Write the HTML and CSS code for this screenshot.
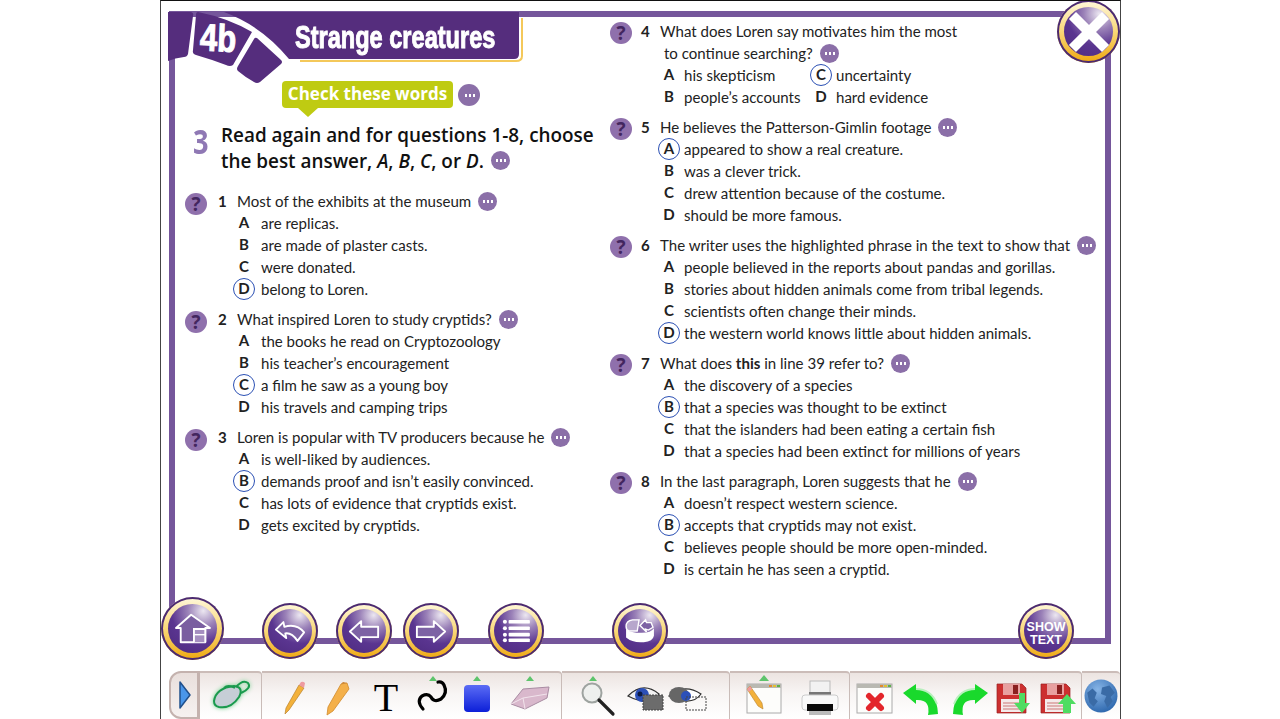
FILE: index.html
```html
<!DOCTYPE html>
<html>
<head>
	<title>Strange creatures</title>
	<link rel="stylesheet" href="styles.css">
</head>
<body>
<div class="stage">
	<div class="frame"></div>

	<div class="unit-head">
		<svg width="960" height="100" viewBox="160 0 960 100">
			<path d="M300 61H516Q522 61 522 56V18" fill="none" stroke="#f4c85a" stroke-width="2"/>
			<path d="M224 12H519V54Q519 59 514 59H289Q262 26 224 12Z" fill="#552d7d"/>
			<path d="M168 12H190Q194 12 193 16L188 54Q187 57 184 57Q175 58 168 61Z" fill="#552d7d"/>
			<path d="M198 12Q228 18 252 32L233 65Q230 67 226 65Q210 59 196 55Q192 54 193 50L196 15Q196 12 198 12Z" fill="#552d7d"/>
			<path d="M257 38L281 60Q283 62 281 64L260 82Q257 84 254 82Q245 77 238 71Q236 69 238 66L254 39Q255 37 257 38Z" fill="#552d7d"/>
		</svg>
		<span class="unit-no">4b</span>
		<span class="unit-title">Strange creatures</span>
	</div>

	<div class="sheet">
		<div class="col col-left">
			<div class="check-row">
				<div class="check-words">Check these words</div>
				<span class="dots"></span>
			</div>
			<div class="task">
				<div class="task-no">3</div>
				<div class="task-text">Read again and for questions 1-8, choose<br>the best answer, <i>A</i>, <i>B</i>, <i>C</i>, or <i>D</i>. <span class="dots dots-inline"></span></div>
			</div>

			<div class="q">
				<div class="q-row"><span class="help">?</span><b class="num">1</b><span>Most of the exhibits at the museum</span><span class="dots"></span></div>
				<div class="opt"><b class="letter">A</b><span>are replicas.</span></div>
				<div class="opt"><b class="letter">B</b><span>are made of plaster casts.</span></div>
				<div class="opt"><b class="letter">C</b><span>were donated.</span></div>
				<div class="opt"><b class="letter picked">D</b><span>belong to Loren.</span></div>
			</div>
			<div class="q">
				<div class="q-row"><span class="help">?</span><b class="num">2</b><span>What inspired Loren to study cryptids?</span><span class="dots"></span></div>
				<div class="opt"><b class="letter">A</b><span>the books he read on Cryptozoology</span></div>
				<div class="opt"><b class="letter">B</b><span>his teacher’s encouragement</span></div>
				<div class="opt"><b class="letter picked">C</b><span>a film he saw as a young boy</span></div>
				<div class="opt"><b class="letter">D</b><span>his travels and camping trips</span></div>
			</div>
			<div class="q">
				<div class="q-row"><span class="help">?</span><b class="num">3</b><span>Loren is popular with TV producers because he</span><span class="dots"></span></div>
				<div class="opt"><b class="letter">A</b><span>is well-liked by audiences.</span></div>
				<div class="opt"><b class="letter picked">B</b><span>demands proof and isn’t easily convinced.</span></div>
				<div class="opt"><b class="letter">C</b><span>has lots of evidence that cryptids exist.</span></div>
				<div class="opt"><b class="letter">D</b><span>gets excited by cryptids.</span></div>
			</div>
		</div>

		<div class="col col-right">
			<div class="q">
				<div class="q-row"><span class="help">?</span><b class="num">4</b><span>What does Loren say motivates him the most</span></div>
				<div class="q-more">to continue searching?<span class="dots"></span></div>
				<div class="opt-pair">
					<div class="opt"><b class="letter">A</b><span>his skepticism</span></div>
					<div class="opt"><b class="letter picked">C</b><span>uncertainty</span></div>
				</div>
				<div class="opt-pair">
					<div class="opt"><b class="letter">B</b><span>people’s accounts</span></div>
					<div class="opt"><b class="letter">D</b><span>hard evidence</span></div>
				</div>
			</div>
			<div class="q">
				<div class="q-row"><span class="help">?</span><b class="num">5</b><span>He believes the Patterson-Gimlin footage</span><span class="dots"></span></div>
				<div class="opt"><b class="letter picked">A</b><span>appeared to show a real creature.</span></div>
				<div class="opt"><b class="letter">B</b><span>was a clever trick.</span></div>
				<div class="opt"><b class="letter">C</b><span>drew attention because of the costume.</span></div>
				<div class="opt"><b class="letter">D</b><span>should be more famous.</span></div>
			</div>
			<div class="q">
				<div class="q-row"><span class="help">?</span><b class="num">6</b><span>The writer uses the highlighted phrase in the text to show that</span><span class="dots"></span></div>
				<div class="opt"><b class="letter">A</b><span>people believed in the reports about pandas and gorillas.</span></div>
				<div class="opt"><b class="letter">B</b><span>stories about hidden animals come from tribal legends.</span></div>
				<div class="opt"><b class="letter">C</b><span>scientists often change their minds.</span></div>
				<div class="opt"><b class="letter picked">D</b><span>the western world knows little about hidden animals.</span></div>
			</div>
			<div class="q">
				<div class="q-row"><span class="help">?</span><b class="num">7</b><span>What does <b>this</b> in line 39 refer to?</span><span class="dots"></span></div>
				<div class="opt"><b class="letter">A</b><span>the discovery of a species</span></div>
				<div class="opt"><b class="letter picked">B</b><span>that a species was thought to be extinct</span></div>
				<div class="opt"><b class="letter">C</b><span>that the islanders had been eating a certain fish</span></div>
				<div class="opt"><b class="letter">D</b><span>that a species had been extinct for millions of years</span></div>
			</div>
			<div class="q">
				<div class="q-row"><span class="help">?</span><b class="num">8</b><span>In the last paragraph, Loren suggests that he</span><span class="dots"></span></div>
				<div class="opt"><b class="letter">A</b><span>doesn’t respect western science.</span></div>
				<div class="opt"><b class="letter picked">B</b><span>accepts that cryptids may not exist.</span></div>
				<div class="opt"><b class="letter">C</b><span>believes people should be more open-minded.</span></div>
				<div class="opt"><b class="letter">D</b><span>is certain he has seen a cryptid.</span></div>
			</div>
		</div>
	</div>

	<div class="round round-big round-close">
		<div class="round-in">
			<svg width="44" height="44" viewBox="0 0 44 44"><path d="M9 9L35 35M35 9L9 35" stroke="#fff" stroke-width="10" stroke-linecap="square"/></svg>
		</div>
	</div>

	<div class="nav">
		<div class="round round-big nav-home">
			<div class="round-in">
				<svg width="38" height="34" viewBox="0 0 40 36"><path d="M2 17L18 3L38 17H33V32H7V17Z" fill="#7a5ea0" stroke="#fff" stroke-width="2" stroke-linejoin="round"/><path d="M21 32V18H33V32" fill="#a58fc0" stroke="#fff" stroke-width="2"/><path d="M21 24H33" stroke="#fff" stroke-width="1.5"/></svg>
			</div>
		</div>
		<div class="round nav-back">
			<div class="round-in">
				<svg width="32" height="25" viewBox="0 0 34 26"><path d="M2 11L10 3L11 8Q24 4 32 14L25 23Q19 14 12 15L13 20Z" fill="#7d62a4" stroke="#fff" stroke-width="2" stroke-linejoin="round"/></svg>
			</div>
		</div>
		<div class="round nav-prev">
			<div class="round-in">
				<svg width="32" height="25" viewBox="0 0 34 26"><path d="M2 13L14 2V8H32V19H14V24Z" fill="#7d62a4" stroke="#fff" stroke-width="2" stroke-linejoin="round"/></svg>
			</div>
		</div>
		<div class="round nav-next">
			<div class="round-in">
				<svg width="32" height="25" viewBox="0 0 34 26"><path d="M32 13L20 2V8H2V19H20V24Z" fill="#7d62a4" stroke="#fff" stroke-width="2" stroke-linejoin="round"/></svg>
			</div>
		</div>
		<div class="round nav-list">
			<div class="round-in">
				<svg width="28" height="24" viewBox="0 0 30 26"><g fill="#fff"><circle cx="3" cy="3" r="2.2"/><circle cx="3" cy="10" r="2.2"/><circle cx="3" cy="17" r="2.2"/><circle cx="3" cy="23" r="2.2"/><rect x="7" y="1" width="23" height="4" rx="1"/><rect x="7" y="8" width="23" height="4" rx="1"/><rect x="7" y="15" width="23" height="4" rx="1"/><rect x="7" y="21" width="23" height="4" rx="1"/></g></svg>
			</div>
		</div>
		<div class="round nav-disc">
			<div class="round-in">
				<svg width="30" height="26" viewBox="0 0 32 28"><path d="M1 9Q1 3 8 2L15 2L13 14H4Q1 13 1 9Z" fill="#b7a7cc" stroke="#fff" stroke-width="1.5"/><path d="M16 8L22 2L23 5H28L30 10L25 13L22 12L23 15Z" fill="#7d62a4" stroke="#fff" stroke-width="1.5"/><path d="M1 12V21Q8 27 20 26Q30 25 31 19V11Q28 16 18 16Q6 16 1 12Z" fill="#fff"/></svg>
			</div>
		</div>
		<div class="round nav-text">
			<div class="round-in">SHOW<br>TEXT</div>
		</div>
	</div>

	<div class="toolbar">
		<div class="tb-sec tb-handle">
			<svg width="14" height="30" viewBox="0 0 14 30"><path d="M2 2L12 15L2 28Z" fill="#4a96ea" stroke="#21508c" stroke-width="1.5" stroke-linejoin="round"/></svg>
		</div>
		<div class="tb-sec tb-mouse">
			<svg class="mouse" width="44" height="40" viewBox="0 0 44 40"><path d="M5 25Q7 12 25 10Q35 11 30 21Q22 33 10 31Q5 30 5 25Z" fill="#c6ced6" stroke="#1a9a4e" stroke-width="2"/><path d="M15 12Q19 8 26 12M27 11Q34 3 39 7Q43 12 32 17" fill="none" stroke="#1a9a4e" stroke-width="2"/></svg>
		</div>
		<div class="tb-sec tb-draw">
			<svg class="tool" viewBox="0 0 40 46"><path d="M26 12L31 15L16 37L12 41L13 35Z" fill="#f3b13a" stroke="#b9812a" stroke-width=".7"/><path d="M26 12L28 9Q30 8 32 10L31 15Z" fill="#ee9aa0"/></svg>
			<svg class="tool" viewBox="0 0 40 46"><path d="M25 11L31 10L33 16L17 38L11 42L12 34Z" fill="#f4b04a" stroke="#d08a2c" stroke-width=".8"/><path d="M25 11L27 9L31 10Z" fill="#c97f2a"/></svg>
			<svg class="tool" viewBox="0 0 40 46"><text x="20" y="38" class="tool-t">T</text></svg>
			<svg class="tool" viewBox="0 0 40 46"><path class="flag" d="M20 3L24 8H16Z"/><path d="M10 36Q3 28 9 23Q15 20 18 24Q21 30 28 26Q35 20 31 12Q29 8 25 9" fill="none" stroke="#000" stroke-width="3.2" stroke-linecap="round"/></svg>
			<svg class="tool" viewBox="0 0 40 46"><defs><linearGradient id="blue" x1="0" y1="0" x2="0" y2="1"><stop offset="0" stop-color="#5b6cf5"/><stop offset="1" stop-color="#0c1fd8"/></linearGradient></defs><path class="flag" d="M20 3L24 8H16Z"/><rect x="7" y="12" width="26" height="27" rx="4" fill="url(#blue)"/></svg>
			<svg class="tool" viewBox="0 0 40 46"><path class="flag" d="M20 3L24 8H16Z"/><path d="M1 31L13 16L39 14L37 25L15 36Z" fill="#d9b8cc" stroke="#a98ca3" stroke-width="1"/><path d="M13 25L37 21M13 25L15 36M13 25L1 31" fill="none" stroke="#f2e4ec" stroke-width="1"/></svg>
		</div>
		<div class="tb-sec tb-view">
			<svg class="tool" viewBox="0 0 40 46"><path class="flag" d="M16 3L20 8H12Z"/><circle cx="15" cy="20" r="9.5" fill="#eef0ee" stroke="#9ea3a0" stroke-width="2"/><path d="M22 27L36 41" stroke="#222" stroke-width="3.2" stroke-linecap="round"/></svg>
			<svg class="tool" viewBox="0 0 40 46"><path d="M3 23Q18 8 34 21Q24 34 3 23Z" fill="#f2f2f2" stroke="#333" stroke-width="1.2"/><circle cx="17" cy="22" r="7" fill="#2c50b8"/><circle cx="15" cy="21" r="2.5" fill="#0c1a44"/><rect x="18" y="22" width="20" height="15" fill="#6c6c6c" stroke="#444" stroke-dasharray="2 1"/></svg>
			<svg class="tool" viewBox="0 0 40 46"><path d="M1 23Q16 10 33 21Q24 34 1 23Z" fill="#fff" stroke="#333" stroke-width="1.2"/><ellipse cx="11" cy="22" rx="10" ry="8" fill="#666"/><circle cx="18" cy="23" r="5" fill="#2c50b8"/><rect x="18" y="24" width="20" height="13" fill="none" stroke="#444" stroke-dasharray="2 1"/></svg>
		</div>
		<div class="tb-sec tb-note">
			<svg class="tool" viewBox="0 0 40 46"><path class="flag" d="M21 2L26 8H16Z"/><rect x="4" y="11" width="34" height="29" fill="#fdfdfb" stroke="#aaa"/><rect x="4" y="11" width="34" height="4" fill="#b9b9b2"/><rect x="26" y="12" width="3" height="2" fill="#e28a30"/><rect x="30" y="12" width="3" height="2" fill="#e2c030"/><rect x="34" y="12" width="3" height="2" fill="#5cb04c"/><path d="M4 16L7 13L19 30L20 36L15 33Z" fill="#f3b13a" stroke="#b9812a" stroke-width=".6"/><path d="M4 16L7 13L9 16L6 19Z" fill="#ee9aa0"/></svg>
			<svg class="tool" viewBox="0 0 40 46"><rect x="10" y="8" width="20" height="15" fill="#f2f2f2" stroke="#bbb"/><rect x="9" y="19" width="22" height="4" fill="#777"/><rect x="2" y="22" width="36" height="15" rx="3" fill="#f9f9f9" stroke="#ccc"/><rect x="7" y="31" width="26" height="7" fill="#0a0a0a"/><rect x="9" y="38" width="22" height="4" fill="#bbb"/></svg>
		</div>
		<div class="tb-sec tb-file">
			<svg class="tool" viewBox="0 0 40 46"><rect x="2" y="11" width="35" height="29" fill="#fdfdfb" stroke="#aaa"/><rect x="2" y="11" width="35" height="4" fill="#b9b9b2"/><rect x="25" y="12" width="3" height="2" fill="#e28a30"/><rect x="29" y="12" width="3" height="2" fill="#e2c030"/><rect x="33" y="12" width="3" height="2" fill="#5cb04c"/><path d="M14 23L26 35M26 23L14 35" stroke="#e3262b" stroke-width="6" stroke-linecap="round"/></svg>
			<svg class="tool" viewBox="0 0 40 46"><path d="M2 20L15 11V16Q36 16 37 41L27 42Q30 26 15 27V31Z" fill="#19d92c"/><path d="M15 16Q30 16 36 31" fill="none" stroke="#b8f0bd" stroke-width="2"/></svg>
			<svg class="tool" viewBox="0 0 40 46"><path d="M38 20L25 11V16Q4 16 3 41L13 42Q10 26 25 27V31Z" fill="#19d92c"/><path d="M25 16Q10 16 4 31" fill="none" stroke="#b8f0bd" stroke-width="2"/></svg>
			<svg class="tool" viewBox="0 0 40 46"><path d="M5 11H30L34 15V40H5Z" fill="#cc3030" stroke="#9a2020" stroke-width=".7"/><rect x="11" y="11" width="17" height="11" fill="#e8a0a0"/><rect x="21" y="12" width="5" height="9" fill="#8a2020"/><rect x="9" y="26" width="21" height="13" fill="#f4eaea"/><path d="M11 30H28M11 33H28M11 36H28" stroke="#c77" stroke-width="1"/><path d="M33 20V30H38L30 40L22 30H27V20Z" fill="#4fdc62"/></svg>
			<svg class="tool" viewBox="0 0 40 46"><path d="M3 11H28L32 15V40H3Z" fill="#cc3030" stroke="#9a2020" stroke-width=".7"/><rect x="9" y="11" width="17" height="11" fill="#e8a0a0"/><rect x="19" y="12" width="5" height="9" fill="#8a2020"/><rect x="7" y="26" width="21" height="13" fill="#f4eaea"/><path d="M9 30H26M9 33H26M9 36H26" stroke="#c77" stroke-width="1"/><path d="M25 40V31H20L29 21L38 31H33V40Z" fill="#4fdc62"/></svg>
		</div>
		<div class="tb-sec tb-globe">
			<svg width="34" height="34" viewBox="0 0 32 32"><defs><radialGradient id="sea" cx=".4" cy=".3" r=".8"><stop offset="0" stop-color="#86b4e6"/><stop offset="1" stop-color="#2560a8"/></radialGradient></defs><circle cx="16" cy="16" r="15.5" fill="url(#sea)"/><path d="M3 13L8 9L12 13L10 18L13 21L9 26L5 22ZM17 8L24 6L29 13L25 17L27 21L22 27L19 21L21 16L16 14Z" fill="#3a6ba6"/></svg>
		</div>
	</div>
</div>
</body>
</html>
```
FILE: styles.css
```css
*{
	margin: 0;
	padding: 0;
	box-sizing: border-box;
}
body{
	background-color: #fff;
	font-family: "Lato", "Liberation Sans", sans-serif;
	font-size: 15.05px;
	color: #222;
	overflow: hidden;
}
.stage{
	position: relative;
	width: 961px;
	height: 719px;
	margin-left: 160px;
	border-top: 1px solid #111;
	border-left: 1px solid #444;
	border-right: 1px solid #444;
	overflow: hidden;
}

/* purple frame + header */
.frame{
	position: absolute;
	left: 8px;
	top: 10px;
	width: 942px;
	height: 633px;
	border: 6px solid #75569b;
}
.unit-head{
	position: absolute;
	left: -1px;
	top: -1px;
	width: 960px;
	height: 100px;
}
.unit-no, .unit-title{
	position: absolute;
	color: #fff;
	font-family: "Liberation Sans", sans-serif;
	font-weight: bold;
	transform-origin: left center;
	white-space: nowrap;
	-webkit-text-stroke: 1px #fff;
}
.unit-no{
	left: 40px;
	top: 16px;
	font-size: 38px;
	line-height: 42px;
	transform: scaleX(.82) rotate(3deg);
}
.unit-title{
	left: 135px;
	top: 20px;
	font-size: 31px;
	line-height: 36px;
	transform: scaleX(.76);
}

/* questions */
.sheet{
	position: relative;
	display: grid;
	grid-template-columns: 425px 1fr;
	padding: 19px 0 0 24px;
}
.col-left{
	padding-top: 61px;
}
.col-right{
	background-image: repeating-linear-gradient(#5b4878 0 15px, transparent 15px 26.5px);
	background-size: 2px 520px;
	background-repeat: no-repeat;
	background-position: -5px 30px;
}
.check-row{
	display: flex;
	align-items: flex-start;
	margin-left: 97px;
}
.check-words{
	position: relative;
	width: 171px;
	height: 27px;
	background-color: #bfcb12;
	border-radius: 4px;
	color: #fff;
	font-family: "Open Sans", sans-serif;
	font-weight: 700;
	font-size: 17px;
	line-height: 26px;
	text-align: center;
}
.check-words::after{
	content: "";
	position: absolute;
	left: 16px;
	top: 27px;
	border-top: 9px solid #bfcb12;
	border-left: 10px solid transparent;
	border-right: 10px solid transparent;
}
.check-row .dots{
	width: 22px;
	height: 22px;
	margin: 3px 0 0 5px;
}
.task{
	display: flex;
	margin: 14px 0 16px 8px;
}
.task-no{
	width: 28px;
	color: #8f78b4;
	font-family: "Open Sans", sans-serif;
	font-weight: 700;
	font-size: 34px;
	line-height: 38px;
	transform: scaleX(.8);
	transform-origin: left top;
}
.task-text{
	font-family: "Open Sans", sans-serif;
	font-weight: 600;
	font-size: 18.9px;
	line-height: 26px;
	color: #111;
	white-space: nowrap;
}
.q{
	margin-bottom: 8px;
}
.q-row, .opt, .q-more{
	display: flex;
	align-items: center;
	height: 22px;
	white-space: nowrap;
}
.help{
	width: 22px;
	height: 22px;
	margin-top: 4px;
	border-radius: 50%;
	background-color: #8f70ac;
	color: #43265f;
	font-family: "Open Sans", sans-serif;
	font-weight: 700;
	font-size: 19px;
	line-height: 22px;
	text-align: center;
}
.col-left .help{
	margin-top: 6px;
}
.num{
	width: 19px;
	margin-left: 11px;
}
.col-right .num{
	margin-left: 9px;
}
.opt{
	padding-left: 48px;
}
.letter{
	width: 22px;
	height: 22px;
	margin-right: 6px;
	border: 1.5px solid transparent;
	border-radius: 50%;
	line-height: 19px;
	text-align: center;
}
.picked{
	border-color: #2b50b4;
}
.col-right .opt .letter{
	margin-right: 4px;
}
.q-more{
	padding-left: 54px;
}
.opt-pair{
	display: flex;
}
.opt-pair .opt:first-child{
	width: 200px;
}
.opt-pair .opt:last-child{
	padding-left: 0;
}
.dots{
	display: inline-flex;
	align-items: center;
	justify-content: center;
	width: 19px;
	height: 19px;
	margin-left: 7px;
	border-radius: 50%;
	background-color: #8b6fa8;
}
.dots::before{
	content: "";
	width: 11px;
	height: 3px;
	background-image: radial-gradient(circle, #fff 1.2px, transparent 1.5px);
	background-size: 4px 3px;
}
.dots-inline{
	vertical-align: top;
	margin: 3px 0 0 2px;
}

/* round buttons */
.round{
	flex: none;
	width: 56px;
	height: 56px;
	padding: 6px;
	border-radius: 50%;
	background: linear-gradient(#fff8dc, #f9d878 50%, #efa80f);
	box-shadow: inset 0 0 0 2px #4b2a72;
}
.round-big{
	width: 63px;
	height: 63px;
	padding: 7px;
}
.round-in{
	display: flex;
	align-items: center;
	justify-content: center;
	width: 100%;
	height: 100%;
	border-radius: 50%;
	background: radial-gradient(circle at 72% 14%, #ece7f1 0, #9b82b8 28%, #5a3590 58%, #4d2a7e 100%);
}
.round-close{
	position: absolute;
	left: 896px;
	top: -1px;
}
.nav{
	position: absolute;
	left: 0;
	top: 596px;
	display: flex;
	align-items: flex-start;
	width: 100%;
}
.nav-back, .nav-prev, .nav-next, .nav-list, .nav-disc, .nav-text{
	margin-top: 6px;
}
.nav-back{
	margin-left: 38px;
}
.nav-prev{
	margin-left: 18px;
}
.nav-next{
	margin-left: 11px;
}
.nav-list{
	margin-left: 29px;
}
.nav-disc{
	margin-left: 68px;
}
.nav-text{
	margin-left: 350px;
}
.nav-text .round-in{
	padding-top: 5px;
	color: #fff;
	font-family: "Liberation Sans", sans-serif;
	font-weight: bold;
	font-size: 12.5px;
	line-height: 12.5px;
	text-align: center;
}

/* toolbar */
.toolbar{
	position: absolute;
	left: 8px;
	bottom: 0;
	display: flex;
	height: 48px;
	width: 951px;
}
.tb-sec{
	display: flex;
	align-items: flex-start;
	height: 48px;
	background: linear-gradient(#ece4e1, #f8f5f4 45%, #fff);
	border-top: 2px solid #cbbcb8;
	border-right: 1px solid #c9bcb8;
	border-top-right-radius: 4px;
}
.tool{
	width: 40px;
	height: 46px;
	flex: none;
}
.mouse{
	filter: drop-shadow(0 0 2px #6fd08a);
}
.flag{
	fill: #5ec46c;
}
.tool-t{
	font-family: "Liberation Serif", serif;
	font-size: 40px;
	text-anchor: middle;
	fill: #000;
}
.tb-handle{
	width: 31px;
	align-items: center;
	padding-left: 7px;
	border: 2px solid #c4b2ae;
	border-right-width: 3px;
	border-radius: 12px 0 0 12px;
	background: linear-gradient(#e9dfdc, #f6f1f0);
}
.tb-mouse{
	width: 62px;
	align-items: center;
	justify-content: center;
}
.tb-draw{
	width: 300px;
	padding-left: 11px;
}
.tb-view{
	width: 168px;
	padding-left: 15px;
}
.tb-note{
	width: 120px;
	padding-left: 13px;
}
.tb-file{
	width: 232px;
	padding-left: 5px;
}
.tb-globe{
	width: 38px;
	align-items: center;
	justify-content: center;
	border-right: none;
}
.tb-draw .tool:nth-child(1){ margin-right: 3px; }
.tb-draw .tool:nth-child(2){ margin-right: 10px; }
.tb-draw .tool:nth-child(3){ margin-right: 7px; }
.tb-draw .tool:nth-child(4){ margin-right: 4px; }
.tb-draw .tool:nth-child(5){ margin-right: 13px; }
.tb-view .tool:nth-child(1){ margin-right: 8px; }
.tb-view .tool:nth-child(2){ margin-right: 3px; }
.tb-note .tool:nth-child(1){ margin-right: 17px; }
.tb-file .tool:nth-child(1){ margin-right: 6px; }
.tb-file .tool:nth-child(2){ margin-right: 9px; }
.tb-file .tool:nth-child(3){ margin-right: 2px; }
.tb-file .tool:nth-child(4){ margin-right: 6px; }
```
